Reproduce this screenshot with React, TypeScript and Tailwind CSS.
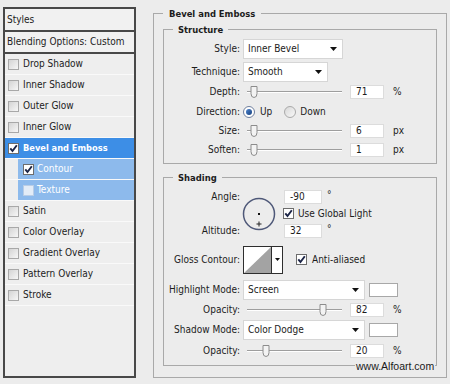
import React from "react";

const F = "[font-family:'DejaVu_Sans_Condensed','Liberation_Sans',sans-serif]";

function CheckBox({ checked = false, faint = false }: { checked?: boolean; faint?: boolean }) {
  const cls = checked
    ? "border-[#6d6d6d] bg-white"
    : faint
    ? "border-[#b9cde6] bg-[#e3ecf7]"
    : "border-[#a8a8a8] bg-gradient-to-br from-[#d4d4d4] to-[#f7f7f7]";
  return (
    <span className={`flex h-[11px] w-[11px] shrink-0 items-center justify-center border ${cls}`}>
      {checked && (
        <svg width="9" height="9" viewBox="0 0 9 9">
          <path d="M1.3 4.3 L3.5 7 L7.8 1.2" stroke="#1b2446" strokeWidth="1.9" fill="none" />
        </svg>
      )}
    </span>
  );
}

type Item = { label: string; checked?: boolean; sel?: "main" | "sub" };
const items: Item[] = [
  { label: "Drop Shadow" },
  { label: "Inner Shadow" },
  { label: "Outer Glow" },
  { label: "Inner Glow" },
  { label: "Bevel and Emboss", checked: true, sel: "main" },
  { label: "Contour", checked: true, sel: "sub" },
  { label: "Texture", sel: "sub" },
  { label: "Satin" },
  { label: "Color Overlay" },
  { label: "Gradient Overlay" },
  { label: "Pattern Overlay" },
  { label: "Stroke" },
];

function ListRow({ item }: { item: Item }) {
  if (item.sel === "main") {
    return (
      <div className="flex h-[21px] shrink-0 items-center border-b border-[#f9f9f9] bg-[#3d8ee6] pl-[3px] text-[9.2px] font-bold text-white">
        <CheckBox checked />
        <span className="ml-[4px]">{item.label}</span>
      </div>
    );
  }
  if (item.sel === "sub") {
    return (
      <div className="flex h-[21px] shrink-0 border-b border-[#f9f9f9]">
        <div className="w-[13px] shrink-0" />
        <div className="flex flex-1 items-center bg-[#8dbaec] pl-[5px] text-white">
          <CheckBox checked={item.checked} faint={!item.checked} />
          <span className="ml-[3px]">{item.label}</span>
        </div>
      </div>
    );
  }
  return (
    <div className="flex h-[21px] shrink-0 items-center border-b border-[#f9f9f9] pl-[3px]">
      <CheckBox />
      <span className="ml-[4px]">{item.label}</span>
    </div>
  );
}

function LeftPanel() {
  return (
    <div className="ml-[3px] mt-[7px] flex h-[371px] w-[133px] shrink-0 flex-col border-2 border-[#484848] bg-[#eeeeee]">
      <div className="flex h-[23px] shrink-0 items-center border-b-2 border-[#484848] bg-[#f1f1f1] pl-[2px]">Styles</div>
      <div className="flex h-[22px] shrink-0 items-center border-b-2 border-[#484848] bg-[#f1f1f1] pl-[2px]">
        Blending Options: Custom
      </div>
      {items.map((it) => (
        <ListRow key={it.label} item={it} />
      ))}
    </div>
  );
}

function Arrow() {
  return (
    <svg width="7" height="4" viewBox="0 0 7 4">
      <path d="M0 0H7L3.5 4Z" fill="#111" />
    </svg>
  );
}

function Dropdown({ text, w }: { text: string; w: string }) {
  return (
    <div className={`flex h-[20px] items-center justify-between border border-[#d6d6d6] bg-white pl-[4px] pr-[5px] ${w}`}>
      <span>{text}</span>
      <Arrow />
    </div>
  );
}

function NumBox({ v, w }: { v: string; w: string }) {
  return (
    <div className={`flex h-[14px] shrink-0 items-center border border-[#dcdcdc] bg-white pl-[5px] ${w}`}>{v}</div>
  );
}

function Thumb() {
  return (
    <svg width="8" height="12" viewBox="0 0 8 12">
      <path d="M1 0.5 H7 V7.5 Q7 11.5 4 11.5 Q1 11.5 1 7.5 Z" fill="#f3f3f3" stroke="#8c8c8c" />
    </svg>
  );
}

function Slider({ pos }: { pos: number }) {
  return (
    <div className="relative flex h-[14px] w-[103px] shrink-0 items-center px-[4px]">
      <div className="w-full">
        <div className="h-px bg-[#9e9e9e]" />
        <div className="h-px bg-white" />
      </div>
      <div className="absolute top-[1px]" style={{ left: pos - 4 }}>
        <Thumb />
      </div>
    </div>
  );
}

function Row({
  label,
  h,
  className = "",
  children,
}: {
  label: string;
  h: string;
  className?: string;
  children: React.ReactNode;
}) {
  return (
    <div className={`flex items-center ${h} ${className}`}>
      <span className="w-[76px] shrink-0 text-right">{label}</span>
      <div className="ml-[3px] flex items-center">{children}</div>
    </div>
  );
}

function SliderRow({
  label,
  pos,
  value,
  unit,
  h,
  className = "",
}: {
  label: string;
  pos: number;
  value: string;
  unit: string;
  h: string;
  className?: string;
}) {
  return (
    <Row label={label} h={h} className={className}>
      <Slider pos={pos} />
      <div className="ml-[4px]">
        <NumBox v={value} w="w-[34px]" />
      </div>
      <span className="ml-[9px]">{unit}</span>
    </Row>
  );
}

function Radio({ on }: { on: boolean }) {
  return on ? (
    <span className="flex h-[12px] w-[12px] shrink-0 items-center justify-center rounded-full border border-[#6f7f9e] bg-white">
      <span className="h-[6px] w-[6px] rounded-full bg-gradient-to-br from-[#4f86cf] to-[#17407e]" />
    </span>
  ) : (
    <span className="block h-[12px] w-[12px] shrink-0 rounded-full border border-[#a9a9a9] bg-gradient-to-br from-[#d8d8d8] to-[#f8f8f8]" />
  );
}

function Dial() {
  return (
    <svg width="34" height="34" viewBox="0 0 34 34">
      <circle cx="17" cy="17" r="15.5" fill="none" stroke="#4e5878" strokeWidth="1.5" />
      <rect x="16" y="16" width="2" height="2" fill="#111" />
      <path d="M17 24.5V29.5M14.5 27H19.5" stroke="#222" strokeWidth="1" />
    </svg>
  );
}

function ContourBox() {
  return (
    <div className="flex h-[28px] w-[40px] border border-[#2e2e2e] bg-white">
      <svg width="27" height="26" viewBox="0 0 27 26" className="shrink-0">
        <path d="M0 26 L27 0 L27 26 Z" fill="#a3a3a3" />
      </svg>
      <div className="flex flex-1 items-center justify-center border-l border-[#2e2e2e]">
        <svg width="5" height="3" viewBox="0 0 5 3">
          <path d="M0 0H5L2.5 3Z" fill="#111" />
        </svg>
      </div>
    </div>
  );
}

export default function App() {
  return (
    <div
      className={`relative flex h-[384px] w-[450px] items-start overflow-hidden bg-[#ececec] text-[10px] leading-[12px] text-[#1c1c1c] ${F}`}
    >
      <LeftPanel />
      <fieldset className="ml-[17px] mt-[6.5px] h-[371px] w-[294px] shrink-0 border border-[#a9a9a9] px-[9px]">
        <legend className="px-[6px] text-[9.4px] font-bold leading-[13px]">Bevel and Emboss</legend>

        <fieldset className="mt-[3px] w-[274px] border border-[#a9a9a9] pb-[3px] pt-[3px]">
          <legend className="ml-[9px] px-[5px] text-[9.4px] font-bold leading-[13px]">Structure</legend>
          <Row label="Style:" h="h-[21px]">
            <Dropdown text="Inner Bevel" w="w-[100px]" />
          </Row>
          <Row label="Technique:" h="h-[21px]" className="mt-[2px]">
            <Dropdown text="Smooth" w="w-[85px]" />
          </Row>
          <SliderRow label="Depth:" pos={11} value="71" unit="%" h="h-[19px]" />
          <Row label="Direction:" h="h-[20px]">
            <Radio on />
            <span className="ml-[5px]">Up</span>
            <span className="ml-[12px] flex">
              <Radio on={false} />
            </span>
            <span className="ml-[4px]">Down</span>
          </Row>
          <SliderRow label="Size:" pos={11} value="6" unit="px" h="h-[19px]" />
          <SliderRow label="Soften:" pos={11} value="1" unit="px" h="h-[19px]" />
        </fieldset>

        <fieldset className="mt-[7.5px] w-[274px] border border-[#a9a9a9] pb-[7.5px]">
          <legend className="ml-[9px] px-[5px] text-[9.4px] font-bold leading-[13px]">Shading</legend>
          <div className="mt-[5.5px] grid grid-cols-[76px_44px_auto] grid-rows-[14px_14px_14px] gap-y-[3px]">
            <span className="col-start-1 row-start-1 self-center text-right">Angle:</span>
            <span className="col-start-1 row-start-3 self-center text-right">Altitude:</span>
            <div className="col-start-2 row-span-3 row-start-1 ml-[2px] self-center">
              <Dial />
            </div>
            <div className="col-start-3 row-start-1 flex items-start">
              <NumBox v="-90" w="w-[38px]" />
              <span className="ml-[5px] leading-[9px]">°</span>
            </div>
            <div className="col-start-3 row-start-2 -ml-[1px] flex items-center">
              <CheckBox checked />
              <span className="ml-[4px]">Use Global Light</span>
            </div>
            <div className="col-start-3 row-start-3 flex items-start">
              <NumBox v="32" w="w-[38px]" />
              <span className="ml-[5px] leading-[9px]">°</span>
            </div>
          </div>
          <Row label="Gloss Contour:" h="h-[28px]" className="mt-[8px]">
            <ContourBox />
            <span className="ml-[13px]">
              <CheckBox checked />
            </span>
            <span className="ml-[5px]">Anti-aliased</span>
          </Row>
          <Row label="Highlight Mode:" h="h-[20px]" className="mt-[6px]">
            <Dropdown text="Screen" w="w-[122px]" />
            <div className="ml-[4px] h-[14px] w-[29px] border border-[#a8a8a8] bg-white" />
          </Row>
          <SliderRow label="Opacity:" pos={80} value="82" unit="%" h="h-[14px]" className="mt-[3px]" />
          <Row label="Shadow Mode:" h="h-[20px]" className="mt-[3px]">
            <Dropdown text="Color Dodge" w="w-[122px]" />
            <div className="ml-[4px] h-[14px] w-[29px] border border-[#a8a8a8] bg-white" />
          </Row>
          <SliderRow label="Opacity:" pos={23} value="20" unit="%" h="h-[14px]" className="mt-[4px]" />
        </fieldset>
      </fieldset>
      <div className="absolute left-[355px] top-[359px] bg-[#ececec] px-[1px] text-[10.5px] leading-[14px] text-[#1a1a1a] [font-family:'Liberation_Sans',Arial,sans-serif]">
        www.Alfoart.com
      </div>
    </div>
  );
}
